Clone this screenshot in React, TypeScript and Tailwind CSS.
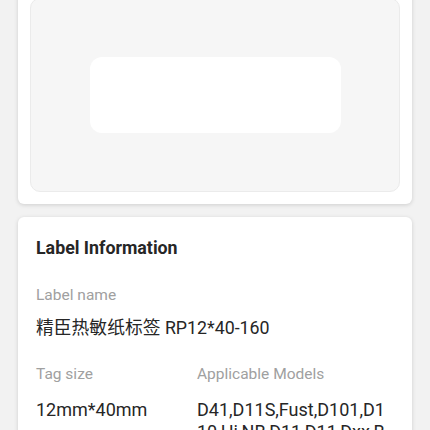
export default function App() {
  return (
    <div
      className="h-[430px] w-[430px] overflow-hidden bg-[#f2f2f2]"
      style={{ fontFamily: "Roboto, 'Noto Sans CJK SC', sans-serif" }}
    >
      <div className="mx-[18px] mt-[-14px] flex flex-col gap-[13px]">
        {/* Preview card */}
        <div className="rounded-md bg-white p-3 shadow-[0_1px_4px_rgba(0,0,0,0.15)]">
          <div className="flex h-[194px] items-center justify-center rounded-[10px] border border-[#ebebeb] bg-[#f6f6f6]">
            <div className="h-[76px] w-[251px] rounded-xl bg-white" />
          </div>
        </div>

        {/* Label information */}
        <div className="rounded-md bg-white px-[18px] pt-5 pb-6 shadow-[0_1px_4px_rgba(0,0,0,0.15)]">
          <h2 className="text-[17.8px] leading-[22px] font-bold text-[#262626]">Label Information</h2>
          <div className="mt-[26px] text-[15.5px] leading-[20px] text-[#a0a0a0]">Label name</div>
          <div className="mt-[12px] text-[17.8px] leading-[22px] text-[#262626]">精臣热敏纸标签 RP12*40-160</div>
          <div className="mt-[25px] grid grid-cols-[161px_1fr]">
            <div>
              <div className="text-[15.5px] leading-[20px] text-[#a0a0a0]">Tag size</div>
              <div className="mt-[15px] text-[18px] leading-[22px] text-[#262626]">12mm*40mm</div>
            </div>
            <div>
              <div className="text-[15.5px] leading-[20px] text-[#a0a0a0]">Applicable Models</div>
              <div className="mt-[15px] break-all text-[18px] leading-[22px] text-[#262626]">
                D41,D11S,Fust,D101,D110,Hi,NB,D11,D11,Dxx,B21,B3S,B1
              </div>
            </div>
          </div>
        </div>
      </div>
    </div>
  );
}
